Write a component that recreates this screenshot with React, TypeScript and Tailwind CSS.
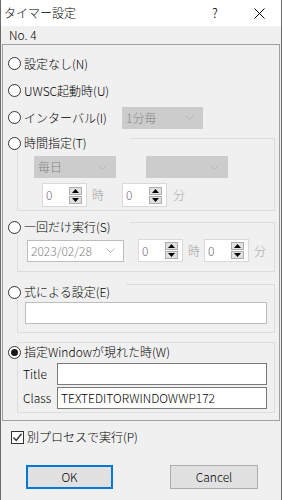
import React from 'react';

const FONT = "font-['Noto_Sans_CJK_JP','Noto_Sans',sans-serif] font-light";

// ── Small Win32-style controls ──

function Radio({ checked }: { checked?: boolean }) {
  return (
    <span className="w-[13px] h-[13px] rounded-full border border-[#333333] bg-white flex items-center justify-center shrink-0">
      {checked && <span className="w-[7px] h-[7px] rounded-full bg-[#1a1a1a]" />}
    </span>
  );
}

function RadioLabel({ label, checked, w }: { label: string; checked?: boolean; w?: string }) {
  return (
    <div className={`flex items-center gap-[3px] h-[16px] bg-[#f0f0f0] pr-1 ${w ?? ''}`}>
      <Radio checked={checked} />
      <span className="text-[12px] leading-none text-black">{label}</span>
    </div>
  );
}

function Chevron({ color = '#b5b5b5' }: { color?: string }) {
  return (
    <svg width="9" height="5" viewBox="0 0 9 5" className="shrink-0">
      <path d="M0.5 0.5 L4.5 4.5 L8.5 0.5" fill="none" stroke={color} strokeWidth="1" />
    </svg>
  );
}

function Combo({ text, w, white }: { text?: string; w: string; white?: boolean }) {
  return (
    <div
      className={`${w} h-[22px] flex items-center justify-between pl-[3px] pr-[8px] border ${
        white ? 'bg-white border-[#bdbdbd]' : 'bg-[#cccccc] border-[#cccccc]'
      }`}
    >
      <span className="text-[12px] leading-none text-[#838383]">{text}</span>
      <Chevron />
    </div>
  );
}

function SpinBtn({ up }: { up?: boolean }) {
  return (
    <span className="w-[13px] h-[8px] bg-[#e1e1e1] border border-[#adadad] flex items-center justify-center">
      <svg width="7" height="4" viewBox="0 0 7 4">
        <path d={up ? 'M0 4 L3.5 0 L7 4 Z' : 'M0 0 L3.5 4 L7 0 Z'} fill="#000" />
      </svg>
    </span>
  );
}

function Spin({ h = 'h-[24px]' }: { h?: string }) {
  return (
    <div className={`w-[45px] ${h} bg-white border border-[#d9d9d9] flex items-center`}>
      <span className="flex-1 pl-[3px] text-[12px] leading-none text-[#6d6d6d]">0</span>
      <div className="flex flex-col gap-[1px] mr-[4px]">
        <SpinBtn up />
        <SpinBtn />
      </div>
    </div>
  );
}

function Group({
  label,
  checked,
  legendTop,
  legendW,
  h,
  mt,
  children,
}: {
  label: string;
  checked?: boolean;
  legendTop: string;
  legendW: string;
  h: string;
  mt: string;
  children: React.ReactNode;
}) {
  return (
    <div className={`relative ml-[14px] w-[258px] ${h} ${mt} border border-[#dcdcdc]`}>
      <div className={`absolute left-[-10px] ${legendTop}`}>
        <RadioLabel label={label} checked={checked} w={legendW} />
      </div>
      {children}
    </div>
  );
}

function Btn({ label, primary }: { label: string; primary?: boolean }) {
  return (
    <div
      className={`h-[24px] flex items-center justify-center bg-[#e1e1e1] text-[12px] text-black ${
        primary ? 'w-[87px] border-2 border-[#0078d7]' : 'w-[88px] border border-[#adadad]'
      }`}
    >
      {label}
    </div>
  );
}

export default function App() {
  return (
    <div className={`w-[282px] h-[500px] bg-[#f0f0f0] border-x border-[#6b6b6b] overflow-hidden flex flex-col ${FONT}`}>
      {/* Title bar */}
      <div className="h-[26px] bg-white flex items-center pl-[3px] shrink-0">
        <span className="text-[12px] text-black">タイマー設定</span>
        <span className="ml-auto w-[30px] text-center text-[13px] text-black">?</span>
        <svg width="11" height="11" viewBox="0 0 11 11" className="ml-[24px] mr-[16px]">
          <path d="M0.5 0.5 L10.5 10.5 M10.5 0.5 L0.5 10.5" stroke="#000" strokeWidth="1" />
        </svg>
      </div>

      <div className="h-[18px] flex items-center pl-[8px] text-[12px] text-black shrink-0">No. 4</div>

      {/* Main frame */}
      <div className="ml-[1px] w-[278px] h-[377px] border border-[#a0a0a0] shrink-0 flex flex-col pt-[5px]">
        <div className="h-[27px] flex items-center pl-[5px]">
          <RadioLabel label="設定なし(N)" />
        </div>
        <div className="h-[27px] flex items-center pl-[5px]">
          <RadioLabel label="UWSC起動時(U)" />
        </div>
        <div className="h-[27px] flex items-center pl-[5px]">
          <div className="w-[114px]">
            <RadioLabel label="インターバル(I)" />
          </div>
          <Combo text="1分毎" w="w-[81px]" />
        </div>

        <Group label="時間指定(T)" legendTop="top-[-4px]" legendW="w-[122px]" h="h-[73px]" mt="mt-[7px]">
          <div className="pt-[17px] pl-[16px] flex flex-col gap-[5px]">
            <div className="flex gap-[30px]">
              <Combo text="毎日" w="w-[82px]" />
              <Combo w="w-[82px]" />
            </div>
            <div className="flex items-center pl-[8px]">
              <Spin />
              <span className="ml-[5px] text-[12px] text-[#a0a0a0]">時</span>
              <div className="ml-[18px]">
                <Spin />
              </div>
              <span className="ml-[6px] text-[12px] text-[#a0a0a0]">分</span>
            </div>
          </div>
        </Group>

        <Group label="一回だけ実行(S)" legendTop="top-[-4px]" legendW="w-[122px]" h="h-[50px]" mt="mt-[11px]">
          <div className="pt-[16px] pl-[9px] flex items-center">
            <Combo text="2023/02/28" w="w-[97px]" white />
            <div className="ml-[14px]">
              <Spin h="h-[23px]" />
            </div>
            <span className="ml-[5px] text-[12px] text-[#a0a0a0]">時</span>
            <div className="ml-[4px]">
              <Spin h="h-[23px]" />
            </div>
            <span className="ml-[5px] text-[12px] text-[#a0a0a0]">分</span>
          </div>
        </Group>

        <Group label="式による設定(E)" legendTop="top-[-1px]" legendW="w-[118px]" h="h-[49px]" mt="mt-[12px]">
          <div className="pt-[17px] pl-[7px]">
            <div className="w-[242px] h-[22px] bg-white border border-[#bdbdbd]" />
          </div>
        </Group>

        <Group label="指定Windowが現れた時(W)" checked legendTop="top-[1px]" legendW="w-[177px]" h="h-[71px]" mt="mt-[9px]">
          <div className="pt-[20px] pl-[5px] flex flex-col gap-[2px]">
            <div className="flex items-center">
              <span className="w-[34px] text-[12px] text-black">Title</span>
              <div className="w-[210px] h-[22px] bg-white border border-[#7a7a7a]" />
            </div>
            <div className="flex items-center">
              <span className="w-[34px] text-[12px] text-black">Class</span>
              <div className="w-[210px] h-[22px] bg-white border border-[#7a7a7a] flex items-center pl-[3px] text-[12px] text-black">
                TEXTEDITORWINDOWWP172
              </div>
            </div>
          </div>
        </Group>
      </div>

      {/* Separate process checkbox */}
      <div className="mt-[9px] pl-[10px] flex items-center gap-[3px] h-[14px]">
        <span className="w-[13px] h-[13px] border border-[#333333] bg-white flex items-center justify-center">
          <svg width="11" height="11" viewBox="0 0 11 11">
            <path d="M1.5 5.5 L4.2 8.5 L9.5 1.8" fill="none" stroke="#333" strokeWidth="1.4" />
          </svg>
        </span>
        <span className="text-[12px] text-black">別プロセスで実行(P)</span>
      </div>

      {/* Buttons */}
      <div className="mt-[21px] flex pl-[25px] gap-[57px]">
        <Btn label="OK" primary />
        <Btn label="Cancel" />
      </div>
    </div>
  );
}
